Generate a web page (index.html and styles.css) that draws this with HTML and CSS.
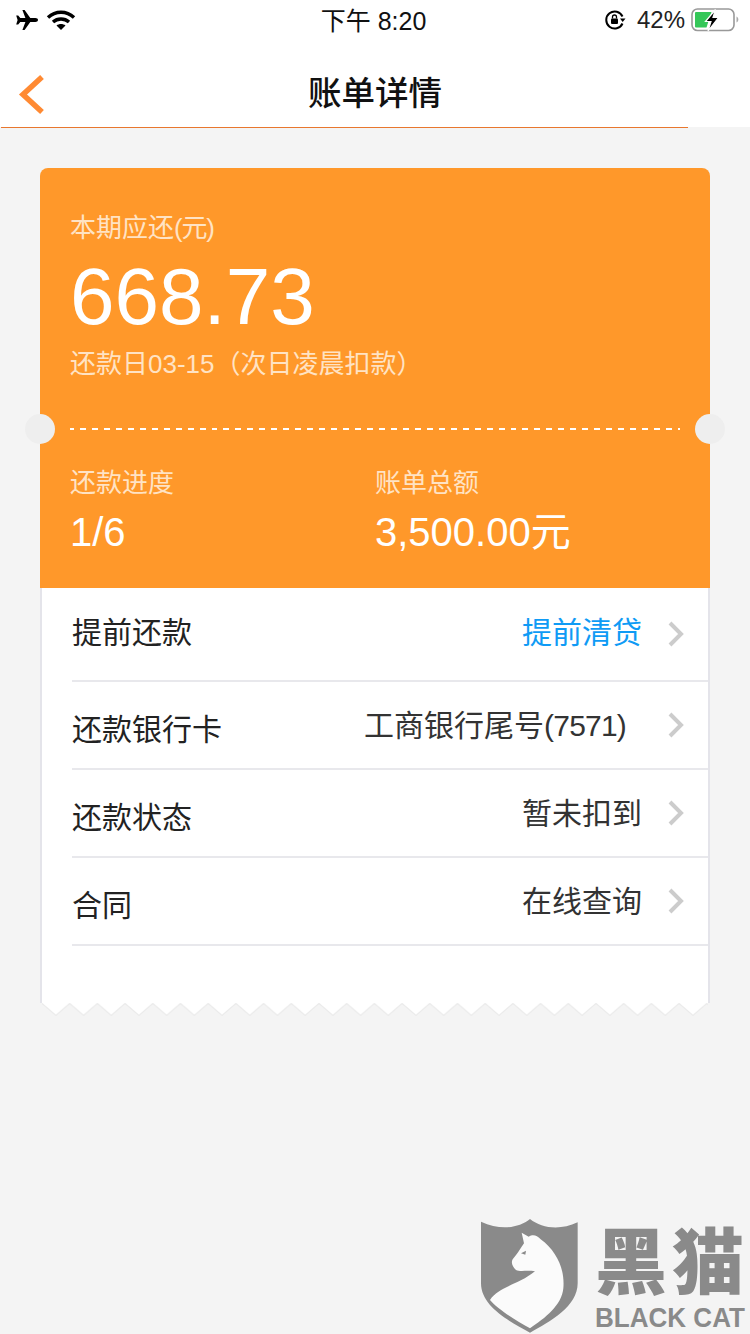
FILE: index.html
```html
<!DOCTYPE html>
<html lang="zh-CN">
  <head>
    <meta charset="UTF-8" />
    <title>账单详情</title>
    <link rel="stylesheet" href="styles.css">
  </head>
  <body>
    <div class="status-bar">
      <div class="status-side">
        <svg class="icon-plane" width="24" height="22" viewBox="0 0 24 22">
          <path d="M23 11c0-1.2-1.2-1.9-2.6-1.9h-5.1L9.6 1H7.4l3 8.100H5.300L3.200 6.400H1.200l1.400 4.600-1.400 4.600h2l2.100-2.700h5.100l-3 8.100h2.200l5.700-8.100h5.100C21.800 12.900 23 12.200 23 11z" fill="#000"/>
        </svg>
        <svg class="icon-wifi" width="30" height="22" viewBox="0 0 30 22">
          <path d="M2 8.500C9.500 1.500 20.500 1.500 28 8.500" fill="none" stroke="#000" stroke-width="3.400"/>
          <path d="M7 13C11.500 9 18.500 9 23 13" fill="none" stroke="#000" stroke-width="3.400"/>
          <path d="M10.500 16.500C13 14.500 17 14.500 19.500 16.500L15 21z" fill="#000"/>
        </svg>
      </div>
      <div class="status-time">下午 8:20</div>
      <div class="status-side status-right">
        <svg class="icon-lock" width="22" height="22" viewBox="0 0 22 22">
          <path d="M18.500 14.500A8.500 8.500 0 1 1 18.500 7.500" fill="none" stroke="#000" stroke-width="2"/>
          <path d="M16 9.500h5.500L18.700 13z" fill="#000"/>
          <rect x="7" y="9.500" width="7" height="5.500" rx="1" fill="#000"/>
          <path d="M8.500 9.500V8a2 2 0 0 1 4 0v1.500" fill="none" stroke="#000" stroke-width="1.300"/>
        </svg>
        <span class="status-battery-text">42%</span>
        <svg class="icon-battery" width="48" height="24" viewBox="0 0 48 24">
          <rect x="1" y="1" width="42" height="21.500" rx="5.500" fill="#fff" stroke="#999" stroke-width="1.600"/>
          <path d="M45.500 8.500c1.200.5 1.800 1.600 1.800 3s-.6 2.500-1.800 3z" fill="#aaa"/>
          <path d="M4 5a1 1 0 0 1 1-1h15.500l-5 15.500H5a1 1 0 0 1-1-1z" fill="#35c759"/>
          <path d="M24.500 1.500L14.500 13.500h5.500L17 23l10.500-13.500h-5.500z" fill="#000" stroke="#fff" stroke-width="1.200"/>
        </svg>
      </div>
    </div>

    <div class="nav">
      <svg class="nav-back" width="28" height="42" viewBox="0 0 28 42">
        <path d="M24 3L5 20.500 24 38" fill="none" stroke="#ff8a33" stroke-width="5.500"/>
      </svg>
      <h1 class="nav-title">账单详情</h1>
    </div>
    <div class="nav-line"></div>

    <div class="bill">
      <div class="bill-top">
        <div class="bill-label">本期应还<span class="tight">(元)</span></div>
        <div class="bill-amount">668.73</div>
        <div class="bill-label bill-date">还款日03-15（次日凌晨扣款）</div>
        <div class="bill-dash"></div>
        <div class="bill-stats">
          <div>
            <div class="bill-label">还款进度</div>
            <div class="bill-value">1/6</div>
          </div>
          <div>
            <div class="bill-label">账单总额</div>
            <div class="bill-value">3,500.00元</div>
          </div>
        </div>
        <span class="notch notch-left"></span>
        <span class="notch notch-right"></span>
      </div>

      <div class="bill-rows">
        <div class="row row-first">
          <span class="row-label">提前还款</span>
          <span class="row-value row-link">提前清贷</span>
          <svg class="chevron" width="18" height="26" viewBox="0 0 18 26"><path d="M3 2l11 11L3 24" fill="none" stroke="#ccc" stroke-width="4"/></svg>
        </div>
        <div class="row">
          <span class="row-label">还款银行卡</span>
          <span class="row-value row-bank">工商银行尾号<span class="tight">(7571)</span></span>
          <svg class="chevron" width="18" height="26" viewBox="0 0 18 26"><path d="M3 2l11 11L3 24" fill="none" stroke="#ccc" stroke-width="4"/></svg>
        </div>
        <div class="row">
          <span class="row-label">还款状态</span>
          <span class="row-value">暂未扣到</span>
          <svg class="chevron" width="18" height="26" viewBox="0 0 18 26"><path d="M3 2l11 11L3 24" fill="none" stroke="#ccc" stroke-width="4"/></svg>
        </div>
        <div class="row">
          <span class="row-label">合同</span>
          <span class="row-value">在线查询</span>
          <svg class="chevron" width="18" height="26" viewBox="0 0 18 26"><path d="M3 2l11 11L3 24" fill="none" stroke="#ccc" stroke-width="4"/></svg>
        </div>
      </div>

      <svg class="bill-edge" width="670" height="13" viewBox="0 0 670 13">
        <defs>
          <pattern id="teeth" x="2" y="0" width="27.700" height="13" patternUnits="userSpaceOnUse">
            <path d="M0 0H27.700L13.850 12.500z" fill="#fff"/>
            <path d="M0 0.500L13.850 12.500 27.700 0.500" fill="none" stroke="#ebebeb" stroke-width="1.200"/>
          </pattern>
        </defs>
        <rect x="2" width="666" height="13" fill="url(#teeth)"/>
      </svg>
    </div>

    <div class="watermark">
      <svg class="watermark-shield" width="110" height="124" viewBox="0 0 330 372">
        <path d="M33 35C90 62 145 55 180 27 215 55 270 62 323 37V220C323 290 240 335 180 368 120 335 33 290 33 220z" fill="#8a8a8a"/>
        <path d="M155 68L176 80C190 72 200 76 212 88 262 125 285 180 280 235 276 285 225 325 180 355 135 330 80 295 60 270 85 230 145 225 195 184 170 180 150 186 138 180 128 170 122 158 128 148 140 135 148 120 162 100z" fill="#fbfbfb"/>
        <path d="M153 130L168 122 166 134z" fill="#8a8a8a"/>
      </svg>
      <div class="watermark-text">
        <div class="watermark-cn">黑猫</div>
        <div class="watermark-en">BLACK CAT</div>
      </div>
    </div>
  </body>
</html>
```

FILE: styles.css
```css
body {
  position: relative;
  width: 750px;
  height: 1334px;
  margin: 0;
  overflow: hidden;
  background: #f4f4f4;
  color: #222;
  font-family: "Liberation Sans", "Noto Sans CJK SC", sans-serif;
}

.status-bar {
  display: grid;
  grid-template-columns: 1fr auto 1fr;
  align-items: center;
  height: 40px;
  padding: 0 18px 0 15px;
  background: #fff;
}

.status-side {
  display: flex;
  align-items: center;
  gap: 7px;
}

.status-right {
  justify-content: flex-end;
  gap: 0;
  margin-right: -7px;
}

.status-time {
  margin-bottom: 3px;
  font-size: 25px;
  color: #111;
}

.status-battery-text {
  margin: 0 6px 0 11px;
  font-size: 24px;
  color: #222;
}

.nav {
  display: flex;
  align-items: center;
  justify-content: center;
  position: relative;
  height: 73px;
  padding-top: 14px;
  background: #fff;
}

.nav-back {
  position: absolute;
  left: 18px;
  top: 34px;
}

.nav-title {
  margin: 0;
  font-size: 33.500px;
  font-weight: 500;
  color: #111;
}

.nav-line {
  width: 687px;
  height: 1px;
  margin-left: 1px;
  background: #e8772e;
}

.bill {
  width: 670px;
  margin: 40px 0 0 40px;
}

.bill-top {
  position: relative;
  height: 378px;
  padding: 42px 30px 0;
  border-radius: 8px 8px 0 0;
  background: #ff982a;
  color: #fff;
}

.bill-label {
  font-size: 26px;
  line-height: 36px;
  color: #ffe3c4;
}

.tight {
  letter-spacing: -0.8px;
}

.bill-label .tight {
  letter-spacing: -1.2px;
}

.bill-amount {
  margin-top: 11px;
  font-size: 80px;
  line-height: 80px;
}

.bill-date {
  margin-top: 9px;
}

.bill-dash {
  height: 2px;
  margin-top: 46px;
  background: repeating-linear-gradient(90deg, #fff -2px 3.980px, transparent 3.980px 9.960px);
}

.bill-stats {
  display: grid;
  grid-template-columns: 305px 1fr;
  margin-top: 35px;
}

.bill-value {
  margin-top: 11px;
  font-size: 40px;
  line-height: 40px;
}

.notch {
  position: absolute;
  top: 246px;
  width: 30px;
  height: 30px;
  border-radius: 50%;
  background: #eeeeee;
}

.notch-left {
  left: -15px;
}

.notch-right {
  right: -15px;
}

.bill-rows {
  height: 415px;
  padding-left: 30px;
  border: solid #e4e4ea;
  border-width: 0 2px;
  background: #fff;
}

.row {
  display: flex;
  align-items: center;
  height: 86px;
  padding-right: 23px;
  border-bottom: 2px solid #e8e8ec;
  font-size: 30px;
}

.row-first {
  height: 92px;
}

.row-label {
  margin-top: 4px;
}

.row-value {
  margin-left: auto;
  margin-bottom: 4px;
  color: #333;
}

.row-first .row-label,
.row-first .row-value {
  margin-top: 0;
  margin-bottom: 9px;
}

.row-link {
  color: #0f9bf5;
}

.row-bank {
  margin-right: 16px;
}

.chevron {
  margin-left: 25px;
}

.bill-edge {
  display: block;
}

.watermark {
  position: absolute;
  left: 470px;
  top: 1210px;
  display: flex;
  width: 280px;
  overflow: hidden;
  color: #8a8a8a;
}

.watermark-shield {
  flex: none;
}

.watermark-text {
  flex: none;
  width: 155px;
  margin-left: 15px;
}

.watermark-cn {
  margin-top: 13px;
  font-size: 72px;
  line-height: 80px;
  font-weight: 900;
  letter-spacing: 5px;
  white-space: nowrap;
}

.watermark-en {
  font-size: 28px;
  line-height: 30px;
  font-weight: 700;
  white-space: nowrap;
  transform: scaleX(0.93);
  transform-origin: left;
}
```
